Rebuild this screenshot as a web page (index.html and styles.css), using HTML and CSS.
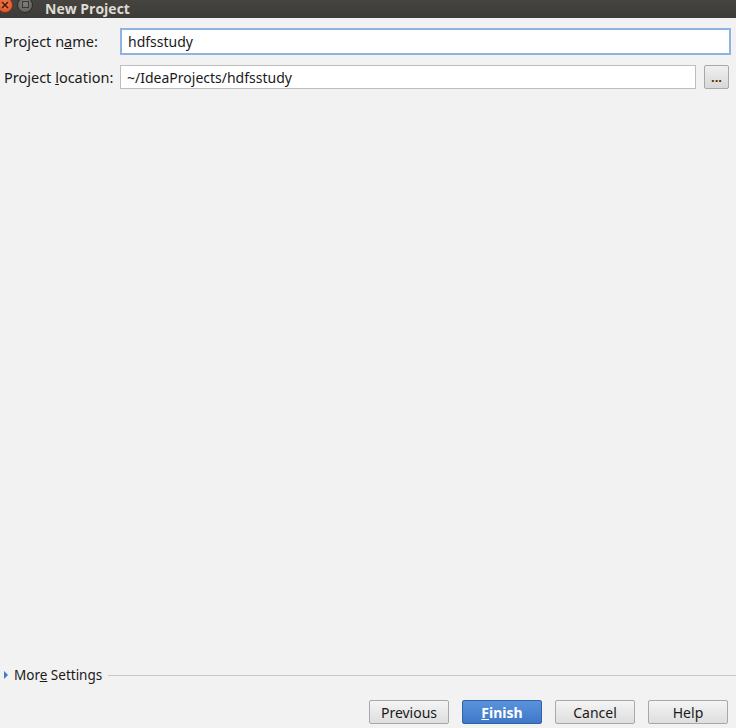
FILE: index.html
```html
<!DOCTYPE html>
<html lang="en">
<head>
    <meta charset="UTF-8">
    <title>New Project</title>
    <link rel="stylesheet" href="styles.css">
</head>
<body>
    <div class="window">
        <div class="titlebar">
            <span class="dot dot-close">
                <svg width="8" height="8" viewBox="0 0 8 8"><path d="M1 1L7 7M7 1L1 7" stroke="#4a1c0c" stroke-width="1.6"/></svg>
            </span>
            <span class="dot dot-min"><span class="min-box"></span></span>
            <span class="title">New Project</span>
        </div>

        <div class="content">
            <div class="form-row">
                <label class="form-label" for="name">Project n<u>a</u>me:</label>
                <input type="text" id="name" class="form-control focused" value="hdfsstudy">
            </div>
            <div class="form-row">
                <label class="form-label" for="location">Project <u>l</u>ocation:</label>
                <input type="text" id="location" class="form-control" value="~/IdeaProjects/hdfsstudy">
                <button type="button" class="browse">...</button>
            </div>
        </div>

        <div class="more">
            <span class="arrow"></span>
            <span class="more-label">Mor<u>e</u> Settings</span>
            <span class="more-line"></span>
        </div>

        <div class="actions">
            <button type="button" class="btn">Previous</button>
            <button type="button" class="btn btn-primary"><u>F</u>inish</button>
            <button type="button" class="btn">Cancel</button>
            <button type="button" class="btn">Help</button>
        </div>
    </div>
</body>
</html>
```

FILE: styles.css
```css
* {
    margin: 0;
    padding: 0;
    box-sizing: border-box;
}

body {
    font-family: "Noto Sans", "DejaVu Sans", sans-serif;
    font-size: 14px;
    color: #1a1a1a;
    background-color: #f2f2f2;
}

.window {
    display: flex;
    flex-direction: column;
    height: 728px;
    overflow: hidden;
}

.titlebar {
    display: flex;
    align-items: center;
    height: 18px;
    overflow: hidden;
    background: linear-gradient(#45443f, #3c3b37);
}

.dot {
    display: flex;
    align-items: center;
    justify-content: center;
    width: 16px;
    height: 16px;
    margin-top: -9px;
    border-radius: 50%;
    flex-shrink: 0;
}

.dot-close {
    margin-left: -3px;
    background: radial-gradient(circle at 50% 40%, #f47a4f, #d9501f);
    border: 1px solid #7a3a22;
}

.dot-min {
    margin-left: 4px;
    background: radial-gradient(circle at 50% 40%, #807f7a, #5a5955);
    border: 1px solid #2c2b28;
}

.min-box {
    width: 7px;
    height: 7px;
    border: 1px solid #3a3935;
}

.title {
    margin-left: 12px;
    font-family: "Open Sans", "Noto Sans", sans-serif;
    font-weight: bold;
    font-size: 14px;
    line-height: 18px;
    color: #dfdbd2;
}

.content {
    flex: 1;
    padding: 11px 5px 0 4px;
}

.form-row {
    display: flex;
    align-items: center;
    height: 24px;
    margin-bottom: 12px;
}

.form-label {
    width: 116px;
    flex-shrink: 0;
    font-size: 14.5px;
}

.form-control {
    flex: 1;
    height: 24px;
    padding: 0 6px;
    font-family: inherit;
    font-size: 14px;
    color: #1a1a1a;
    background: #fff;
    border: 1px solid #bdbdbd;
}

.focused {
    height: 27px;
    border: 2px solid #8db2e3;
}

.browse {
    width: 25px;
    height: 24px;
    margin-left: 8px;
    margin-right: 2px;
    font-weight: bold;
    color: #5a2a00;
    background: linear-gradient(#f0f0f0, #d8d8d8);
    border: 1px solid #a8a8a8;
    border-radius: 2px;
}

.more {
    display: flex;
    align-items: center;
    padding-left: 4px;
    margin-bottom: 16px;
}

.arrow {
    width: 0;
    height: 0;
    border-top: 4px solid transparent;
    border-bottom: 4px solid transparent;
    border-left: 4px solid #3d7fc0;
}

.more-label {
    margin-left: 6px;
    font-size: 13.5px;
}

.more-line {
    flex: 1;
    height: 1px;
    margin-left: 6px;
    background-color: #c8c8c8;
}

.actions {
    display: flex;
    justify-content: flex-end;
    gap: 13px;
    padding: 0 8px 4px 0;
}

.btn {
    width: 80px;
    height: 24px;
    font-family: inherit;
    font-size: 14px;
    color: #1a1a1a;
    background: linear-gradient(#f4f4f4, #dedede);
    border: 1px solid #a8a8a8;
    border-radius: 2px;
}

.btn-primary {
    font-weight: bold;
    color: #fff;
    background: linear-gradient(#5a93dc, #3f78c8);
    border-color: #2f62aa;
}
```
